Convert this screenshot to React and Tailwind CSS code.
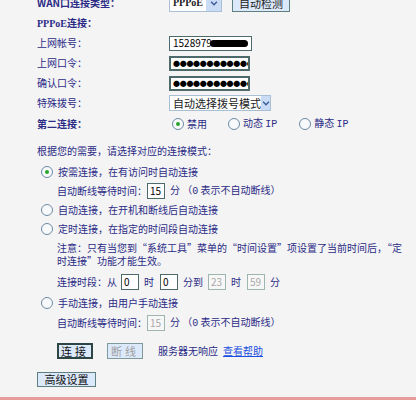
import React from "react";

const font = { fontFamily: '"Noto Sans CJK SC", "Noto Sans", sans-serif' };
const mono = { fontFamily: '"Liberation Mono", monospace' };

function Radio({ checked }) {
  return (
    <span className="inline-flex h-[12px] w-[12px] shrink-0 items-center justify-center rounded-full border border-[#6d8aa6] bg-[#f7f9fb]">
      {checked && <span className="h-[4px] w-[4px] rounded-full bg-[#2aa52a]" />}
    </span>
  );
}

function Box({ value, disabled }) {
  return (
    <span
      className={`inline-flex h-[16px] w-[18px] items-center border px-[2px] text-[10px] leading-none ${
        disabled ? "border-[#9fb5b0] bg-[#f7f7f7] text-[#a8a8a8]" : "border-[#4d6a6a] bg-white text-black"
      }`}
    >
      {value}
    </span>
  );
}

function Label({ children, bold }) {
  return <div className={`w-[132px] shrink-0 ${bold ? "font-bold" : ""}`}>{children}</div>;
}

function Row({ children, className = "" }) {
  return <div className={`flex items-center whitespace-nowrap ${className}`}>{children}</div>;
}

function Chevron() {
  return (
    <svg width="8" height="5" viewBox="0 0 9 6">
      <path d="M1 1l3.5 3.5L8 1" fill="none" stroke="#3a5a9a" strokeWidth="1.6" />
    </svg>
  );
}

export default function App() {
  const dots = "●●●●●●●●●●●●●";
  return (
    <div className="relative h-[400px] w-[416px] overflow-hidden bg-[#f4f4f4] text-[10px] leading-[12px] text-[#2b2b86]" style={font}>
      <div className="pl-[37px]">
        <Row className="-mt-[7px] h-[20px]">
          <Label bold>WAN口连接类型：</Label>
          <div className="flex h-[18px] w-[53px] items-center justify-between border border-[#a9bfd6] bg-white pl-[3px] text-[10px] font-bold text-[#222]" style={{ fontFamily: '"Liberation Serif", serif' }}>
            PPPoE
            <span className="flex h-[16px] w-[15px] items-center justify-center bg-[#c9dbf5]">
              <Chevron />
            </span>
          </div>
          <button className="ml-[10px] flex h-[18px] w-[58px] items-center justify-center border border-[#5d7f7f] bg-[#dce9fb] text-[11px] leading-none text-[#222]">
            自动检测
          </button>
        </Row>
        <Row className="h-[20px]">
          <Label bold><span style={{ fontFamily: '"Liberation Serif", serif' }}>PPPoE</span>连接：</Label>
        </Row>
        <Row className="h-[20px]">
          <Label>上网帐号：</Label>
          <div className="flex h-[15px] w-[83px] items-center border border-[#4d6a6a] bg-white pl-[3px] text-[10px] text-black">
            1528979
            <span className="ml-[-2px] h-[7px] w-[38px] rounded-full bg-black" />
          </div>
        </Row>
        <Row className="h-[20px]">
          <Label>上网口令：</Label>
          <div className="flex h-[15px] w-[81px] items-center overflow-hidden border-2 border-[#4d6a6a] bg-white pl-[2px] text-[7px] tracking-[-0.3px] text-black">
            {dots}
          </div>
        </Row>
        <Row className="h-[20px]">
          <Label>确认口令：</Label>
          <div className="flex h-[15px] w-[81px] items-center overflow-hidden border-2 border-[#4d6a6a] bg-white pl-[2px] text-[7px] tracking-[-0.3px] text-black">
            {dots}
          </div>
        </Row>
        <Row className="h-[20px]">
          <Label>特殊拨号：</Label>
          <div className="flex h-[16px] w-[102px] items-center justify-between border border-[#a9bfd6] bg-white pl-[3px] text-[11px] text-[#222]">
            自动选择拨号模式
            <span className="flex h-[14px] w-[13px] items-center justify-center bg-[#c9dbf5]">
              <Chevron />
            </span>
          </div>
        </Row>
        <Row className="mt-[1px] h-[20px]">
          <Label bold>第二连接：</Label>
          <div className="ml-[3px] flex items-center gap-[3px]">
            <Radio checked />
            <span>禁用</span>
          </div>
          <div className="ml-[21px] flex items-center gap-[3px]">
            <Radio />
            <span>动态 <span style={mono}>IP</span></span>
          </div>
          <div className="ml-[22px] flex items-center gap-[3px]">
            <Radio />
            <span>静态 <span style={mono}>IP</span></span>
          </div>
        </Row>
        <Row className="mt-[7px] h-[20px]">根据您的需要，请选择对应的连接模式：</Row>
        <Row className="mt-[1px] h-[19px] gap-[5px] pl-[4px]">
          <Radio checked />
          <span>按需连接，在有访问时自动连接</span>
        </Row>
        <Row className="h-[19px] pl-[20px]">
          <span>自动断线等待时间：</span>
          <Box value="15" />
          <span className="ml-[5px]">分 （<span style={mono}>0</span> 表示不自动断线）</span>
        </Row>
        <Row className="h-[19px] gap-[5px] pl-[4px]">
          <Radio />
          <span>自动连接，在开机和断线后自动连接</span>
        </Row>
        <Row className="h-[19px] gap-[5px] pl-[4px]">
          <Radio />
          <span>定时连接，在指定的时间段自动连接</span>
        </Row>
        <div className="mt-[3px] whitespace-nowrap pl-[20px] leading-[13px]">
          注意：只有当您到“系统工具”菜单的“时间设置”项设置了当前时间后，“定
          <br />
          时连接”功能才能生效。
        </div>
        <Row className="mt-[5px] h-[20px] pl-[20px]">
          <span>连接时段：从</span>
          <span className="ml-[4px] flex"><Box value="0" /></span>
          <span className="ml-[5px]">时</span>
          <span className="ml-[6px] flex"><Box value="0" /></span>
          <span className="ml-[5px]">分到</span>
          <span className="ml-[5px] flex"><Box value="23" disabled /></span>
          <span className="ml-[5px]">时</span>
          <span className="ml-[6px] flex"><Box value="59" disabled /></span>
          <span className="ml-[5px]">分</span>
        </Row>
        <Row className="mt-[1px] h-[20px] gap-[5px] pl-[4px]">
          <Radio />
          <span>手动连接，由用户手动连接</span>
        </Row>
        <Row className="h-[20px] pl-[20px]">
          <span>自动断线等待时间：</span>
          <Box value="15" disabled />
          <span className="ml-[5px]">分 （<span style={mono}>0</span> 表示不自动断线）</span>
        </Row>
        <div className="mt-[10px] flex h-[16px] items-center whitespace-nowrap pl-[20px]">
          <button className="flex h-[16px] w-[36px] items-center justify-center border-2 border-[#2d4545] bg-[#dce9fb] text-[11px] leading-none tracking-[3px] text-[#111]">
            连接
          </button>
          <button className="ml-[14px] flex h-[16px] w-[36px] items-center justify-center border border-[#7f9a9a] bg-[#dce9fb] text-[11px] leading-none tracking-[3px] text-[#a0a0a0]">
            断线
          </button>
          <span className="ml-[15px]">服务器无响应</span>
          <span className="ml-[5px] text-[#1a4fe0] underline">查看帮助</span>
        </div>
        <button className="mt-[13px] flex h-[15px] w-[59px] items-center justify-center border border-[#5d7f7f] bg-[#dce9fb] text-[11px] leading-none text-[#111]">
          高级设置
        </button>
      </div>
      <div className="absolute bottom-0 left-0 h-[3px] w-full bg-[#e79c9c]" />
    </div>
  );
}
